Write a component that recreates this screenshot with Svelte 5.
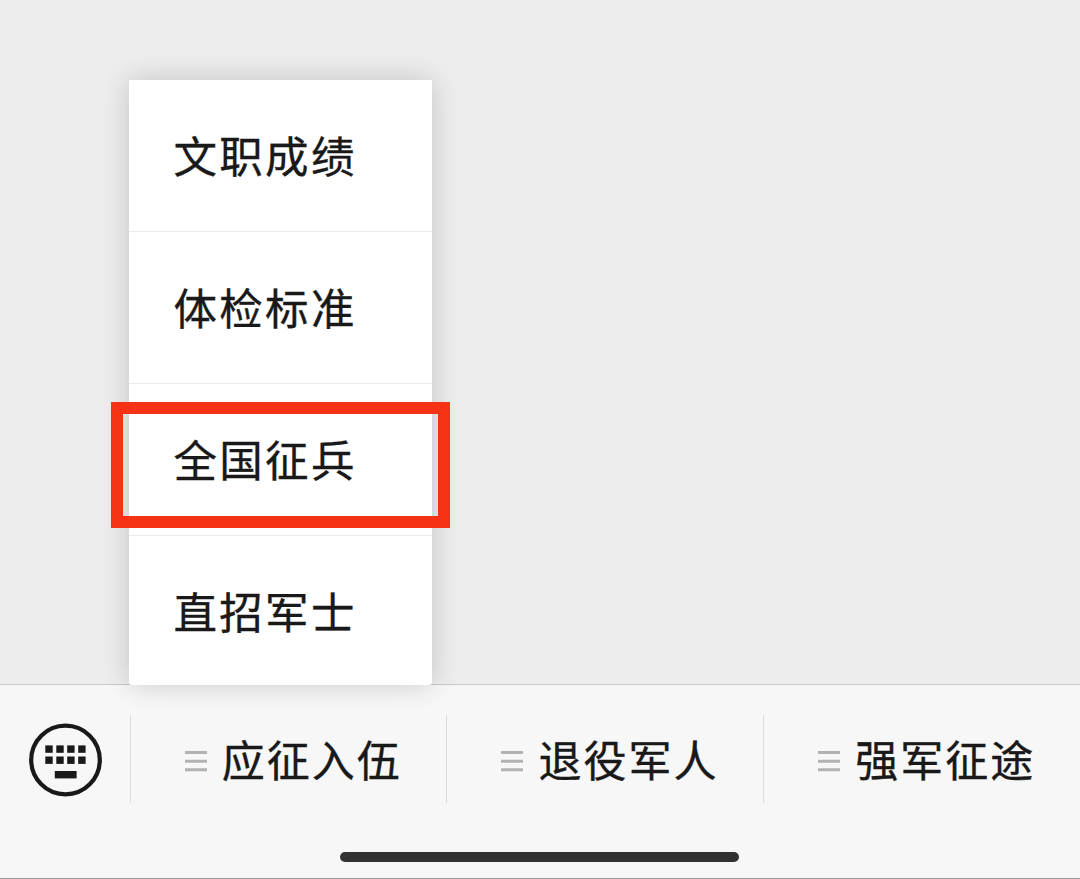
<script lang="ts">
	let submenu = ['文职成绩', '体检标准', '全国征兵', '直招军士'];
	let tabs = ['应征入伍', '退役军人', '强军征途'];

	const marked = '全国征兵';
	const keyColumns = [45.3, 56.3, 67.2, 78.2];
	const keyRows = [45.4, 56.5];
</script>

<div class="screen">
	<main class="chat"></main>

	<footer class="bottom">
		<nav class="menu-bar">
			<button type="button" class="keyboard" aria-label="键盘">
				<svg width="130" height="88" viewBox="0 0 130 88">
					<circle cx="65.5" cy="45" r="34.3" fill="none" stroke="#191919" stroke-width="4.2" />
					{#each keyRows as y}
						{#each keyColumns as x}
							<rect {x} y={y - 15} width="7.4" height="7.4" fill="#191919" />
						{/each}
					{/each}
					<rect x="54.8" y="56" width="21.8" height="7.4" fill="#191919" />
				</svg>
			</button>
			{#each tabs as tab}
				<button type="button" class="tab">
					<svg class="lines" width="22" height="22" viewBox="0 0 22 22">
						<path d="M0 2.5h22M0 11.2h22M0 19.8h22" stroke="#b2b2b2" stroke-width="3" />
					</svg>
					<span>{tab}</span>
				</button>
			{/each}
		</nav>
		<div class="home-indicator"></div>
	</footer>

	<ul class="submenu">
		{#each submenu as item}
			<li class:marked={item === marked}>{item}</li>
		{/each}
	</ul>
</div>

<style>
	:global(body) {
		margin: 0;
	}

	.screen {
		position: relative;
		display: flex;
		flex-direction: column;
		height: 879px;
		overflow: hidden;
		background: #ededed;
		color: #191919;
		font-family: 'Noto Sans CJK SC', sans-serif;
		-webkit-text-stroke: 0.35px #191919;
	}

	.chat {
		flex: 1;
	}

	.bottom {
		box-sizing: border-box;
		height: 195px;
		padding-top: 30px;
		border-top: 1px solid #c8c8c8;
		border-bottom: 1px solid #999;
		background: #f7f7f7;
	}

	.menu-bar {
		display: flex;
		height: 88px;
	}

	button {
		box-sizing: border-box;
		padding: 0;
		border: 0;
		background: none;
		color: inherit;
		font: inherit;
		cursor: pointer;
	}

	.keyboard {
		width: 129.7px;
	}

	.keyboard svg {
		display: block;
	}

	.tab {
		flex: 1;
		display: flex;
		align-items: center;
		gap: 15px;
		padding: 3px 0 0 54px;
		border-left: 1px solid #dcdcdc;
		font-size: 43px;
		line-height: 60px;
		letter-spacing: 2px;
		white-space: nowrap;
	}

	.tab span {
		margin-bottom: 5px;
	}

	.lines {
		flex-shrink: 0;
	}

	.home-indicator {
		width: 399px;
		height: 10px;
		margin: 49px 0 0 340px;
		border-radius: 5px;
		background: #323232;
	}

	.submenu {
		position: absolute;
		top: 80px;
		left: 129px;
		width: 303px;
		margin: 0;
		padding: 0;
		list-style: none;
		border-radius: 0 0 3px 3px;
		background: #fff;
		box-shadow: 0 0 28px rgba(0, 0, 0, 0.18);
	}

	.submenu li {
		position: relative;
		box-sizing: border-box;
		height: 152px;
		padding: 0 0 0 44.5px;
		border-bottom: 1px solid #ebebeb;
		font-size: 43.5px;
		line-height: 149px;
		letter-spacing: 2.3px;
	}

	.submenu li:last-child {
		height: 149px;
		border-bottom: 0;
	}

	/* highlight frame drawn over the menu */
	.marked::after {
		content: '';
		position: absolute;
		top: 17.5px;
		left: -18px;
		width: 315px;
		height: 102px;
		border: 12px solid #f53314;
	}
</style>
